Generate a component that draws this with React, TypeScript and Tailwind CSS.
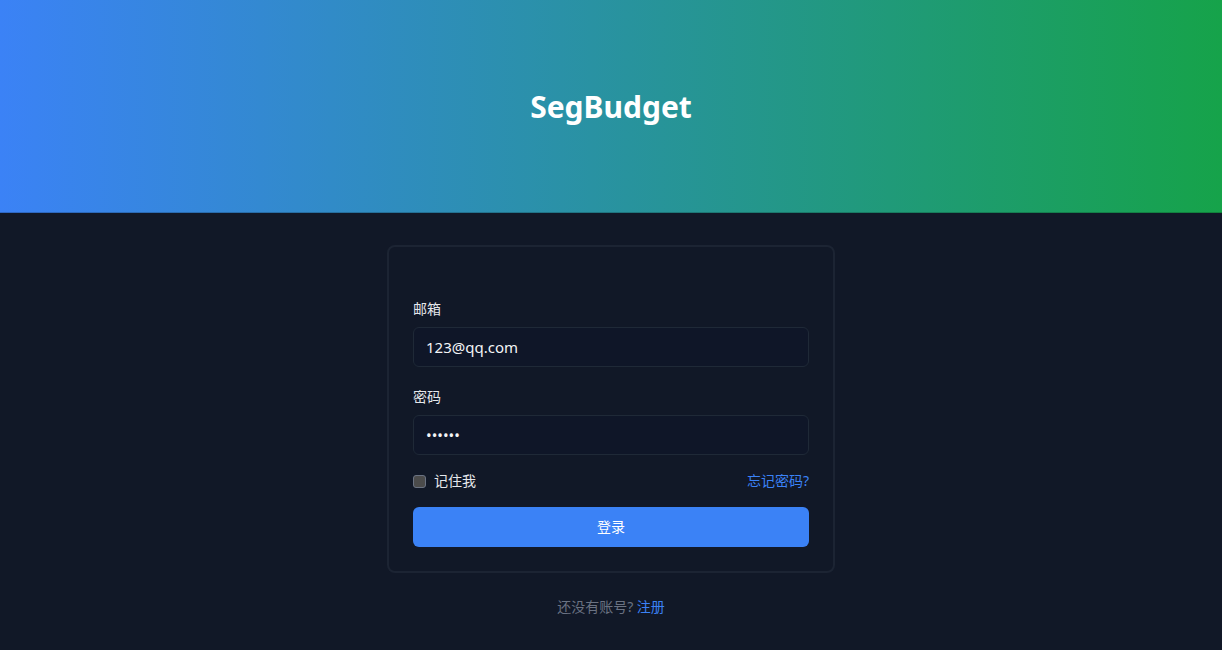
import { useState } from 'react'

const font = { fontFamily: '"Noto Sans", "Noto Sans CJK SC", sans-serif' }

export default function App() {
  const [email, setEmail] = useState('123@qq.com')
  const [password, setPassword] = useState('123456')
  const [remember, setRemember] = useState(false)

  return (
    <div className="min-h-[650px] bg-[#111827] text-gray-100" style={font}>
      <header className="flex h-[213px] items-center justify-center border-b border-black/20 bg-[linear-gradient(to_right,#3b82f6,#16a34a)]">
        <h1 className="text-[30px] font-bold text-white">SegBudget</h1>
      </header>

      <main className="flex flex-col items-center pt-8">
        <form
          className="w-[448px] rounded-lg border-2 border-[#1c2433] bg-[#111827] px-6 pb-6 pt-[52px]"
          onSubmit={(e) => e.preventDefault()}
        >
          <div className="mb-5">
            <label className="mb-2 block text-sm leading-5 text-gray-200">邮箱</label>
            <input
              type="email"
              value={email}
              onChange={(e) => setEmail(e.target.value)}
              className="h-10 w-full rounded-md border border-[#1f2937] bg-[#0f1628] px-3 text-[15px] text-gray-100 outline-none"
            />
          </div>
          <div className="mb-4">
            <label className="mb-2 block text-sm leading-5 text-gray-200">密码</label>
            <input
              type="password"
              value={password}
              onChange={(e) => setPassword(e.target.value)}
              className="h-10 w-full rounded-md border border-[#1f2937] bg-[#0f1628] px-3 text-[15px] text-gray-100 outline-none"
            />
          </div>
          <div className="mb-4 flex h-5 items-center justify-between text-sm">
            <label className="flex items-center gap-2 text-gray-200">
              <input
                type="checkbox"
                checked={remember}
                onChange={(e) => setRemember(e.target.checked)}
                className="h-[13px] w-[13px] appearance-none rounded-[3px] border border-gray-500 bg-[#4b4b4b]"
              />
              记住我
            </label>
            <a href="#" className="text-[#3b82f6]">
              忘记密码?
            </a>
          </div>
          <button
            type="submit"
            className="h-10 w-full rounded-md bg-[#3b82f6] text-sm text-white"
          >
            登录
          </button>
        </form>

        <p className="mt-6 text-sm leading-5 text-gray-500">
          还没有账号? <a href="#" className="text-[#3b82f6]">注册</a>
        </p>
      </main>
    </div>
  )
}
